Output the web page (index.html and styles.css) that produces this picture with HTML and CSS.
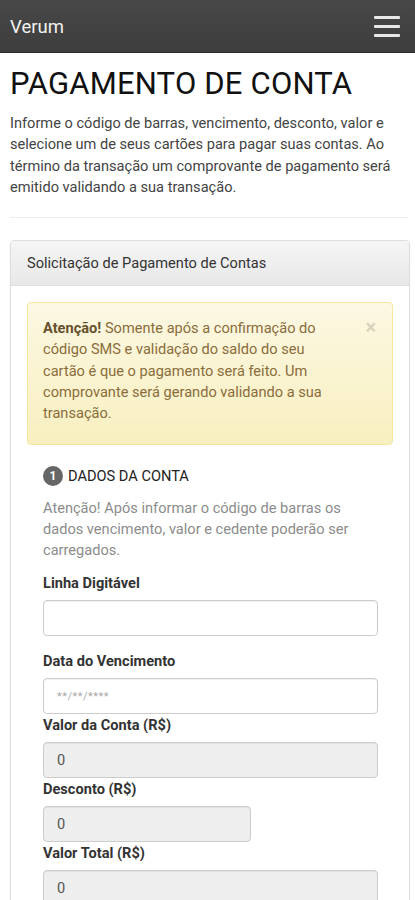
FILE: index.html
```html
<!DOCTYPE html>
<html lang="pt-BR">
<head>
<meta charset="utf-8">
<title>Pagamento de Conta</title>
<link rel="stylesheet" href="styles.css">
</head>
<body>
<nav class="navbar">
  <span class="brand">Verum</span>
  <span class="toggle" aria-label="menu"><span class="bar"></span><span class="bar"></span><span class="bar"></span></span>
</nav>
<main class="container">
  <h1 class="title">PAGAMENTO DE CONTA</h1>
  <p class="lead">Informe o código de barras, vencimento, desconto, valor e selecione um de seus cartões para pagar suas contas. Ao término da transação um comprovante de pagamento será emitido validando a sua transação.</p>
  <hr class="sep">
  <section class="panel">
    <div class="panel-heading">Solicitação de Pagamento de Contas</div>
    <div class="panel-body">
      <div class="alert">
        <span class="close">×</span>
        <p class="alert-text"><strong>Atenção!</strong> Somente após a confirmação do código SMS e validação do saldo do seu cartão é que o pagamento será feito. Um comprovante será gerando validando a sua transação.</p>
      </div>
      <form class="form">
        <div class="step"><span class="badge">1</span><span class="step-title">DADOS DA CONTA</span></div>
        <p class="help">Atenção! Após informar o código de barras os dados vencimento, valor e cedente poderão ser carregados.</p>
        <div class="group g-first">
          <label class="label">Linha Digitável</label>
          <div class="input"></div>
        </div>
        <div class="group g-wide">
          <label class="label">Data do Vencimento</label>
          <div class="input"><span class="placeholder">**/**/****</span></div>
        </div>
        <div class="group">
          <label class="label">Valor da Conta (R$)</label>
          <div class="input readonly">0</div>
        </div>
        <div class="group">
          <label class="label">Desconto (R$)</label>
          <div class="input readonly short">0</div>
        </div>
        <div class="group">
          <label class="label">Valor Total (R$)</label>
          <div class="input readonly">0</div>
        </div>
      </form>
    </div>
  </section>
</main>
</body>
</html>
```

FILE: styles.css
```css
* { box-sizing: border-box; }
html, body { margin: 0; padding: 0; background: #fff; }
body {
  font-family: Roboto, "Liberation Sans", Arial, sans-serif;
  font-size: 14.6px;
  color: #333;
  overflow: hidden;
}
.navbar {
  height: 53px;
  background: linear-gradient(#474747, #3e3e3e);
  border-bottom: 1px solid #2c2c2c;
  display: flex;
  align-items: center;
  justify-content: space-between;
  padding: 0 15px 0 10px;
}
.brand {
  color: #f2f2f2;
  font-size: 18.5px;
  line-height: 20px;
  margin-top: 1px;
}
.toggle {
  display: flex;
  flex-direction: column;
  gap: 6px;
  width: 26px;
  margin-top: 1px;
}
.bar {
  display: block;
  height: 3px;
  border-radius: 1px;
  background: #e8e8e8;
}
.container {
  padding: 0 7px 0 10px;
}
.title {
  font-size: 31px;
  line-height: 33px;
  font-weight: 400;
  color: #111;
  margin: 14px 0 13px;
  letter-spacing: 0.2px;
}
.lead {
  margin: 0;
  line-height: 21.3px;
  color: #444;
  padding-right: 4px;
}
.sep {
  border: 0;
  border-top: 1px solid #eee;
  margin: 19px 0 22px;
}
.panel {
  border: 1px solid #ddd;
  border-radius: 4px;
  box-shadow: 0 1px 2px rgba(0,0,0,0.05);
  margin-right: -2px;
  margin-bottom: 40px;
}
.panel-heading {
  background: linear-gradient(#f5f5f5, #e8e8e8);
  border-bottom: 1px solid #ddd;
  border-radius: 3px 3px 0 0;
  padding: 12px 16px;
  line-height: 20px;
  color: #333;
}
.panel-body {
  padding: 16px 16px 60px;
}
.alert {
  position: relative;
  background: linear-gradient(#fcf8e3, #f8efc0);
  border: 1px solid #f5e79e;
  border-radius: 4px;
  color: #8a6d3b;
  padding: 15px 50px 20px 15px;
}
.alert-text {
  margin: 0;
  line-height: 21.25px;
}
.alert-text strong { color: #66512c; font-weight: 700; }
.close {
  position: absolute;
  top: 14px;
  right: 16px;
  font-size: 20px;
  line-height: 20px;
  color: #d9d2b8;
  font-weight: 700;
}
.form {
  padding: 0 15px 0 16px;
}
.step {
  display: flex;
  align-items: center;
  gap: 5px;
  margin-top: 21px;
  height: 20px;
}
.badge {
  width: 20px;
  height: 20px;
  border-radius: 50%;
  background: #666;
  color: #fff;
  font-size: 12px;
  font-weight: 700;
  display: flex;
  align-items: center;
  justify-content: center;
}
.step-title {
  color: #222;
}
.help {
  margin: 12px 0 0;
  line-height: 21px;
  color: #8c8c8c;
}
.group { margin-top: 1px; }
.g-first { margin-top: 12px; }
.g-wide { margin-top: 15px; }
.label {
  display: block;
  font-weight: 700;
  line-height: 20px;
  margin-bottom: 7px;
  color: #333;
}
.input {
  height: 36px;
  border: 1px solid #ccc;
  border-radius: 4px;
  background: #fff;
  box-shadow: inset 0 1px 1px rgba(0,0,0,0.06);
  padding: 0 13px;
  display: flex;
  align-items: center;
  color: #555;
}
.readonly { background: #eee; }
.short { width: 208px; }
.placeholder {
  color: #aaa;
  font-size: 11px;
  letter-spacing: 0.5px;
}
```
